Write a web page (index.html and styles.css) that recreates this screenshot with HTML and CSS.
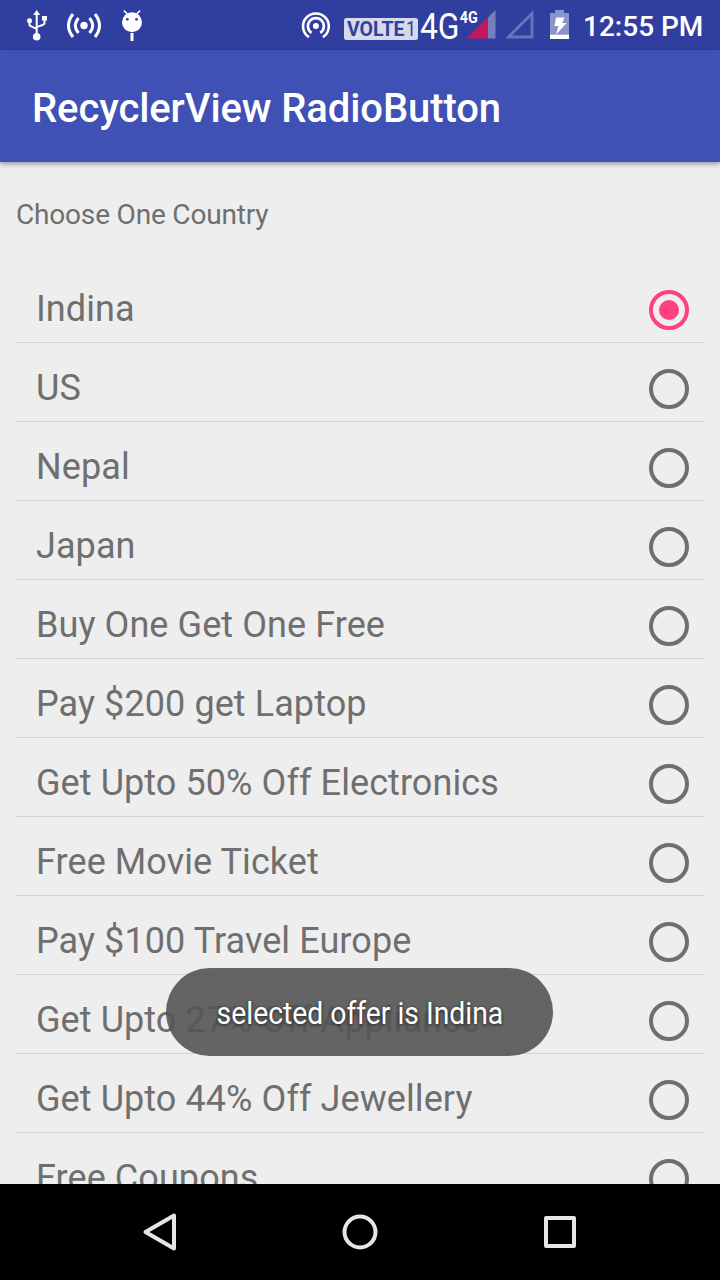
FILE: index.html
```html
<!DOCTYPE html>
<html lang="en">
<head>
<meta charset="utf-8">
<title>RecyclerView RadioButton</title>
<link rel="stylesheet" href="styles.css">
</head>
<body>
<div class="screen">
  <header class="status">
    <div class="status-left">
      <svg width="26" height="50" viewBox="24 0 26 50" fill="none" stroke="#fff" stroke-width="2">
        <path d="M36.700 36V14M29.500 21.500v3.200q0 1 1.200 1.500l6 2.700M44.500 19v4q0 1.200-1.300 1.700l-6.500 2.400"/>
        <path d="M36.700 10l3.500 5h-7zM42 16h5v4.500h-5z" fill="#fff" stroke="none"/>
        <circle cx="29.500" cy="20.800" r="2.500" fill="#fff" stroke="none"/>
        <circle cx="36.700" cy="36.700" r="3.800" fill="#fff" stroke="none"/>
      </svg>
      <svg width="40" height="50" viewBox="64 0 40 50" fill="none" stroke="#fff" stroke-width="3">
        <circle cx="84" cy="25.500" r="3.700" fill="#fff" stroke="none"/>
        <path d="M78.500 18q-6.500 7.500 0 15M89.500 18q6.500 7.500 0 15M73 14q-9 11.500 0 23M95 14q9 11.500 0 23"/>
      </svg>
      <svg width="28" height="50" viewBox="118 0 28 50">
        <circle cx="132" cy="22.300" r="10" fill="#fff"/>
        <path d="M124 10.500l4 4.500M140 10.500l-4 4.500" stroke="#fff" stroke-width="1.700"/>
        <path d="M132 33v8" stroke="#fff" stroke-width="3"/>
        <circle cx="127.300" cy="19.300" r="1.400" fill="#303f9f"/>
        <circle cx="136.500" cy="19.300" r="1.400" fill="#303f9f"/>
      </svg>
    </div>
    <div class="status-right">
      <svg width="32" height="50" viewBox="300 0 32 50" fill="none" stroke="#fff" stroke-width="2.600">
        <circle cx="315.900" cy="26" r="3" fill="#fff" stroke="none"/>
        <path d="M311.600 32.900a8 8 0 1 1 8.600 0M308.900 37.200a12.900 12.900 0 1 1 14 0"/>
      </svg>
      <svg class="volte" width="74" height="50" viewBox="344 0 74 50">
        <rect x="344" y="18" width="74" height="22" rx="2.500" fill="#d6d9ec"/>
        <text x="347" y="36" font-size="20" font-weight="700" textLength="57.500" lengthAdjust="spacingAndGlyphs">VOLTE</text>
        <text x="406" y="36" font-size="20" textLength="10" lengthAdjust="spacingAndGlyphs">1</text>
      </svg>
      <svg class="network" width="78" height="50" viewBox="420 0 78 50">
        <text x="420" y="39" font-size="37.500" textLength="39.500" lengthAdjust="spacingAndGlyphs">4G</text>
        <text x="459.700" y="22.500" font-size="16.500" font-weight="700" textLength="18" lengthAdjust="spacingAndGlyphs">4G</text>
        <path d="M488 17.500L495.500 10v28.500H488z" fill="#7680bd"/>
        <path d="M466.500 38.500L488 17v21.500z" fill="#c2185b"/>
      </svg>
      <svg class="sim" width="32" height="50" viewBox="504 0 32 50">
        <path d="M508.500 37L532 13.500V37z" fill="none" stroke="#6873b8" stroke-width="2.800"/>
      </svg>
      <svg class="battery" width="24" height="50" viewBox="548 0 24 50">
        <path d="M550 13h5v-3h9v3h5v21.500h-19z" fill="#8b94ca"/>
        <path d="M550 34.500h19V39h-19zM556 17.500h8.500l-2.300 5.500h4.600l-10.800 11.500 2.500-8.500h-4z" fill="#fff"/>
      </svg>
      <span class="time">12:55 PM</span>
    </div>
  </header>
  <div class="toolbar"><h1>RecyclerView RadioButton</h1></div>
  <main class="content">
    <p class="prompt">Choose One Country</p>
    <ul class="list">
      <li><span>Indina</span><i class="radio checked"></i></li>
      <li><span>US</span><i class="radio"></i></li>
      <li><span>Nepal</span><i class="radio"></i></li>
      <li><span>Japan</span><i class="radio"></i></li>
      <li><span>Buy One Get One Free</span><i class="radio"></i></li>
      <li><span>Pay $200 get Laptop</span><i class="radio"></i></li>
      <li><span>Get Upto 50% Off Electronics</span><i class="radio"></i></li>
      <li><span>Free Movie Ticket</span><i class="radio"></i></li>
      <li><span>Pay $100 Travel Europe</span><i class="radio"></i></li>
      <li><span>Get Upto 27% Off Appliance</span><i class="radio"></i></li>
      <li><span>Get Upto 44% Off Jewellery</span><i class="radio"></i></li>
      <li><span>Free Coupons</span><i class="radio"></i></li>
    </ul>
  </main>
  <nav class="navbar">
    <svg width="40" height="40" viewBox="0 0 40 40"><path d="M5.500 20L34 3.500v33z"/></svg>
    <svg width="40" height="40" viewBox="0 0 40 40"><circle cx="20" cy="20" r="15.500"/></svg>
    <svg width="40" height="40" viewBox="0 0 40 40"><rect x="6" y="6" width="28" height="28"/></svg>
  </nav>
  <div class="toast"><span>selected offer is Indina</span></div>
</div>
</body>
</html>
```

FILE: styles.css
```css
* { box-sizing: border-box; margin: 0; padding: 0; }

body { font-family: Roboto, "Noto Sans", sans-serif; }

.screen {
  position: relative;
  display: flex;
  flex-direction: column;
  width: 720px;
  height: 1280px;
  overflow: hidden;
  background: #eee;
}

svg { display: block; flex: none; }

.status {
  display: flex;
  justify-content: space-between;
  flex: none;
  height: 50px;
  padding: 0 17px 0 24px;
  background: #303f9f;
  color: #fff;
}

.status-left { display: flex; gap: 14px; }
.status-right { display: flex; width: 403px; }
.status text { font-family: Roboto, sans-serif; }
.volte { margin-left: 12px; fill: #303f9f; }
.network { margin-left: 2px; fill: #fff; }
.sim { margin-left: 6px; }
.battery { margin-left: 12px; }

.time {
  margin-left: 11px;
  line-height: 53px;
  font-size: 28px;
  font-weight: 500;
  white-space: nowrap;
}

.toolbar {
  position: relative;
  flex: none;
  height: 112px;
  padding-left: 32px;
  background: #3f51b5;
  color: #fff;
  box-shadow: 0 2px 5px rgba(0, 0, 0, .38);
}

.toolbar h1 {
  font-size: 40px;
  font-weight: 500;
  line-height: 118px;
  letter-spacing: -.1px;
  white-space: nowrap;
}

.content {
  flex: 1;
  min-height: 0;
  overflow: hidden;
  padding: 32px 16px 0;
  color: #6f6f6f;
}

.prompt {
  height: 70px;
  font-size: 28px;
  line-height: 42px;
  letter-spacing: -.18px;
}

.list { list-style: none; }

.list li {
  display: flex;
  justify-content: space-between;
  height: 79px;
  padding: 0 15px 0 20px;
  border-bottom: 1px solid #d2d2d2;
  font-size: 36px;
  line-height: 91px;
  letter-spacing: .08px;
  white-space: nowrap;
}

.radio {
  flex: none;
  width: 40px;
  height: 40px;
  margin-top: 26px;
  border: 4px solid #6f6f6f;
  border-radius: 50%;
}

.radio.checked {
  padding: 6px;
  border-color: #ff4081;
  background: #ff4081 content-box;
}

.navbar {
  display: flex;
  flex: none;
  justify-content: center;
  align-items: center;
  gap: 160px;
  height: 96px;
  background: #000;
}

.navbar svg {
  fill: none;
  stroke: #e6e6e6;
  stroke-width: 4;
  stroke-linejoin: round;
}

.toast {
  position: absolute;
  left: 166px;
  top: 968px;
  display: flex;
  justify-content: center;
  width: 387px;
  height: 88px;
  border-radius: 44px;
  background: rgba(84, 84, 84, .9);
  color: #fff;
}

.toast span {
  font-size: 32px;
  line-height: 90px;
  white-space: nowrap;
  text-shadow: 0 1px 4px rgba(0, 0, 0, .7);
  transform: scaleX(.885);
}
```
